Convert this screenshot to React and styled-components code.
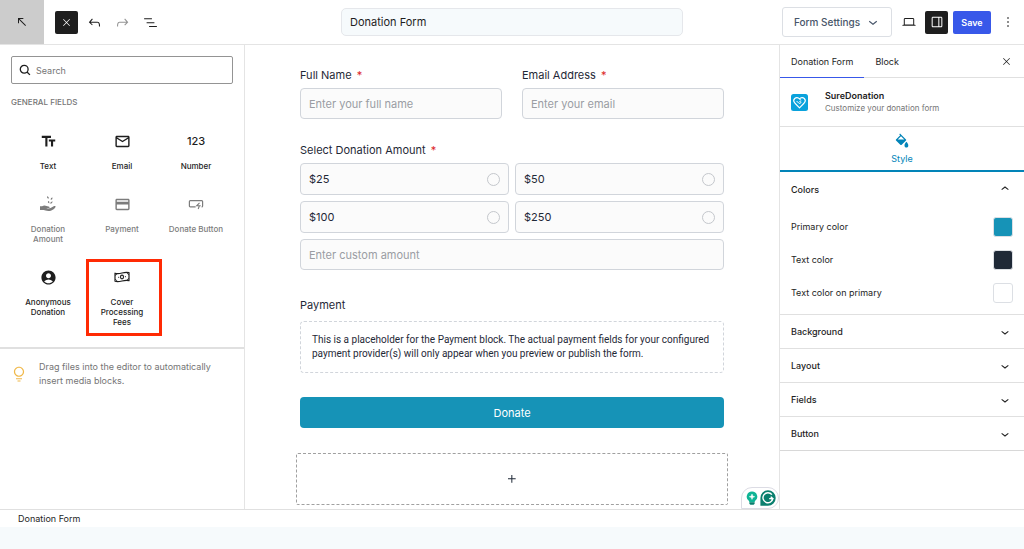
import React, { useState } from "react"
import styled, { createGlobalStyle } from "styled-components"
import { MdAccountCircle, MdCreditCard, MdMailOutline, MdTextFields } from "react-icons/md"

const icons = {
    arrow: "M14 6H6v8h1.5V8.5L17 18l1-1-9.5-9.5H14V6Z",
    close: "m13.06 12 6.47-6.47-1.06-1.06L12 10.94 5.53 4.47 4.47 5.53 10.94 12l-6.47 6.47 1.06 1.06L12 13.06l6.47 6.47 1.06-1.06L13.06 12Z",
    undo: "M18.3 11.7c-.6-.6-1.4-.9-2.3-.9H6.7l2.9-3.3-1.1-1-4.5 5L8.5 16l1-1-2.7-2.7H16c.5 0 .9.2 1.3.5 1 1 1 3.4 1 4.5v.3h1.5v-.2c0-1.5 0-4.3-1.5-5.7z",
    redo: "M15.6 6.5l-1.1 1 2.9 3.3H8c-.9 0-1.7.3-2.3.9-1.4 1.5-1.4 4.2-1.4 5.6v.2h1.5v-.3c0-1.1 0-3.5 1-4.5.3-.3.7-.5 1.3-.5h9.2L14.5 15l1.1 1.1 4.6-4.6-4.6-5z",
    list: "M3 6h11v1.5H3V6Zm3.5 5.5h11V13h-11v-1.5ZM21 17H10v1.5h11V17Z",
    desktop: "M20.5 16h-.7V8c0-1.1-.9-2-2-2H6.2c-1.1 0-2 .9-2 2v8h-.7c-.8 0-1.5.7-1.5 1.5h20c0-.8-.7-1.5-1.5-1.5zM5.7 8c0-.3.2-.5.5-.5h11.6c.3 0 .5.2.5.5v7.6H5.7V8z",
    drawer: "M18 4H6c-1.1 0-2 .9-2 2v12c0 1.1.9 2 2 2h12c1.1 0 2-.9 2-2V6c0-1.1-.9-2-2-2zm-4 14.5H6c-.3 0-.5-.2-.5-.5V6c0-.3.2-.5.5-.5h8v13zm4.5-.5c0 .3-.2.5-.5.5h-2.5v-13H18c.3 0 .5.2.5.5v12z",
    more: "M13 19h-2v-2h2v2zm0-6h-2v-2h2v2zm0-6h-2V5h2v2z",
    plus: "M11 12.5V17.5H12.5V12.5H17.5V11H12.5V6H11V11H6V12.5H11Z",
    down: "M17.5 11.6L12 16l-5.5-4.4.9-1.2L12 14l4.5-3.6 1 1.2z",
    up: "M6.5 12.4L12 8l5.5 4.4-.9 1.2L12 10l-4.5 3.6-1-1.2z",
    tip: "M12 15.8c-3.7 0-6.8-3-6.8-6.8s3-6.8 6.8-6.8c3.7 0 6.8 3 6.8 6.8s-3.1 6.8-6.8 6.8zm0-12C9.1 3.8 6.8 6.1 6.8 9s2.4 5.2 5.2 5.2c2.9 0 5.2-2.4 5.2-5.2S14.9 3.8 12 3.8zM8 17.5h8V19H8zM10 20.5h4V22h-4v-1.5z",
}

function Icon({ name, size = 16 }) {
    return (
        <svg width={size} height={size} viewBox="0 0 24 24" fill="currentColor" aria-hidden="true">
            <path d={icons[name]} />
        </svg>
    )
}

const SearchIcon = () => (
    <svg width="12" height="12" viewBox="0 0 12 12" fill="none" stroke="#1e1e1e" strokeWidth="1.3" aria-hidden="true">
        <circle cx="5.2" cy="5.2" r="3.9" />
        <path d="M8 8l2.900 2.900" />
    </svg>
)

const HandIcon = () => (
    <svg width="18" height="18" viewBox="0 0 18 18" fill="currentColor" aria-hidden="true">
        <path d="M1 11.300h2.200c1.300-.9 3-.9 4.300-.2.600.3 1.200.4 2 .4 1.300 0 1.600 1.300.4 1.500l-2.600.2c1.300.6 3.100.5 4.300-.1l3.100-1.900c1-.6 2.300-.1 1.800.8-.9 1.700-2.500 3-4.700 3.700-1.800.5-3.700.4-5.300-.1-1.200-.4-2.300-.5-3.600-.5H1z" />
        <path d="M8.400 1l1.400 1.400-.5 1.600-1.300-1.400zM12 3.100l1.600-.6-.4 1.800-1.500.7zM9 5.900l1.200.7.2 1.900-1.500-.9zM11.600 7.300l2-1-.5 1.800-1.700.9z" />
    </svg>
)

const ButtonIcon = () => (
    <svg width="16" height="16" viewBox="0 0 16 16" fill="none" stroke="currentColor" aria-hidden="true">
        <path d="M7.600 10.900H2.300c-.6 0-.9-.4-.9-.9V5.500c0-.6.400-.9.900-.9h11.400c.5 0 .9.400.9.900V10c0 .6-.4.9-1 .9" strokeWidth="1.200" />
        <path d="M11.500 6.900L8.700 9.800h2.700L10.200 13M11.300 9.800h1.400" strokeWidth="1.100" />
    </svg>
)

const CashIcon = () => (
    <svg width="18" height="16" viewBox="0 0 18 16" fill="none" stroke="currentColor" aria-hidden="true">
        <path d="M2 4.200c2.400.9 4.600.5 7-.2s4.600-1 7-.4v8.100c-2.400-.7-4.600-.3-7 .3s-4.600 1.100-7 .3z" strokeWidth="1.200" strokeLinejoin="round" />
        <ellipse cx="9" cy="8" rx="1.500" ry="1.900" strokeWidth="1.100" />
        <path d="M2 6.200c1.100 0 1.700-.6 1.700-1.600M16 5.400c-1.100 0-1.700-.5-1.700-1.600M2 10.500c1.100 0 1.700.6 1.700 1.700M16 9.700c-1.100 0-1.700.6-1.700 1.600M5.200 8.300h1M11.900 7.700h1" strokeWidth="1" />
    </svg>
)

const HeartLogo = () => (
    <svg width="17" height="17" viewBox="0 0 17 17" fill="none" aria-hidden="true">
        <rect width="17" height="17" rx="2.500" fill="#0aa2dc" />
        <path d="M8.500 13.800L3.800 9C2.500 7.600 2.600 5.600 3.700 4.500 5 3.200 7.100 3.300 8.500 4.900 9.900 3.300 12 3.200 13.300 4.500c1.100 1.100 1.200 3.100-.1 4.500z" stroke="#fff" strokeWidth="1.100" strokeLinejoin="round" />
        <path d="M5.900 7.300l1.800 1.800c.9.900 2.300.2 2.200-.9-.1-.9-1.200-1-1.600-.4M8.500 5l1.500 1.300" stroke="#fff" strokeLinecap="round" />
    </svg>
)

const PaintIcon = () => (
    <svg width="14" height="16" viewBox="0 0 14 16" fill="#0284b8" aria-hidden="true">
        <path d="M5 .6L11 6.400c.3.3.3.800 0 1.100L6.700 11.700c-.4.400-1 .4-1.400 0L1 7.500c-.3-.3-.3-.8 0-1.100L5.200 2.300 4.300 1.400zM6 3.200L2.700 6.500h6.600z" fillRule="evenodd" />
        <path d="M11.400 8.800c1.300 1.600 1.900 2.600 1.900 3.600 0 1.300-.8 2.200-1.900 2.200s-1.900-.9-1.900-2.200c0-1 .6-2 1.900-3.600z" />
    </svg>
)

const GrammarlyBulb = () => (
    <svg width="12" height="15" viewBox="0 0 12 15" aria-hidden="true">
        <path d="M6 .5a5.200 5.200 0 0 1 3 9.500l-.4 1.300H3.400L3 10A5.200 5.200 0 0 1 6 .5z" fill="#0fb495" />
        <path d="M3.400 11.300h5.200v1.500l-1 1H4.400l-1-1z" fill="#0a7f6e" />
        <path d="M6 3l.7 2 2 .7-2 .7L6 8.400l-.7-2-2-.7 2-.7z" fill="#fff" stroke="#fff" strokeWidth=".5" />
    </svg>
)

const GrammarlyMark = () => (
    <svg width="16" height="16" viewBox="0 0 16 16" aria-hidden="true">
        <path d="M8 .3A7.700 7.700 0 1 1 8 15.700H.4V8A7.700 7.700 0 0 1 8 .3z" fill="#0a7f6e" />
        <path d="M11.900 4.600A5 5 0 1 0 12.900 8.600H9.200M10.700 6.700l2.200 1.900-1.300 2" fill="none" stroke="#fff" strokeWidth="1.400" />
    </svg>
)

const blocks = [
    { label: "Text", icon: <MdTextFields size={17} /> },
    { label: "Email", icon: <MdMailOutline size={17} /> },
    { label: "Number", icon: <span>123</span> },
    { label: "Donation Amount", icon: <HandIcon />, disabled: true },
    { label: "Payment", icon: <MdCreditCard size={17} />, disabled: true },
    { label: "Donate Button", icon: <ButtonIcon />, disabled: true },
    { label: "Anonymous Donation", icon: <MdAccountCircle size={17} /> },
    { label: "Cover Processing Fees", icon: <CashIcon />, highlighted: true },
]

const colors = [
    { label: "Primary color", value: "#1693b7" },
    { label: "Text color", value: "#1f2937" },
    { label: "Text color on primary", value: "#ffffff" },
]

const amounts = ["$25", "$50", "$100", "$250"]

function App() {
    const [title, setTitle] = useState("Donation Form")
    const [amount, setAmount] = useState("")
    const [colorsOpen, setColorsOpen] = useState(true)

    return (
        <>
            <GlobalStyle />
            <Page>
                <Header>
                    <HeaderTools>
                        <BackLink href="#" aria-label="Back"><Icon name="arrow" /></BackLink>
                        <IconButton $dark aria-label="Close inserter"><Icon name="close" size={11} /></IconButton>
                        <IconButton aria-label="Undo"><Icon name="undo" size={17} /></IconButton>
                        <IconButton aria-label="Redo" disabled><Icon name="redo" size={17} /></IconButton>
                        <IconButton aria-label="List view"><Icon name="list" size={17} /></IconButton>
                    </HeaderTools>
                    <TitleInput aria-label="Form title" value={title} onChange={(e) => setTitle(e.target.value)} />
                    <HeaderActions>
                        <SettingsButton>Form Settings <Icon name="down" size={18} /></SettingsButton>
                        <IconButton aria-label="Preview"><Icon name="desktop" /></IconButton>
                        <IconButton $dark aria-label="Settings"><Icon name="drawer" /></IconButton>
                        <SaveButton>Save</SaveButton>
                        <IconButton aria-label="Options"><Icon name="more" /></IconButton>
                    </HeaderActions>
                </Header>

                <Body>
                    <Inserter>
                        <SearchBox>
                            <SearchIcon />
                            <input type="search" aria-label="Search" placeholder="Search" />
                        </SearchBox>
                        <GroupTitle>General Fields</GroupTitle>
                        <BlockGrid>
                            {blocks.map((block) => (
                                <BlockItem key={block.label} disabled={block.disabled} $highlighted={block.highlighted}>
                                    <BlockIcon>{block.icon}</BlockIcon>
                                    {block.label}
                                </BlockItem>
                            ))}
                        </BlockGrid>
                        <Tip>
                            <Icon name="tip" size={18} />
                            <p>Drag files into the editor to automatically insert media blocks.</p>
                        </Tip>
                    </Inserter>

                    <Canvas>
                        <Form onSubmit={(e) => e.preventDefault()}>
                            <FieldRow>
                                <Field>
                                    <FieldLabel htmlFor="name">Full Name <Required>*</Required></FieldLabel>
                                    <TextInput id="name" placeholder="Enter your full name" />
                                </Field>
                                <Field>
                                    <FieldLabel htmlFor="email">Email Address <Required>*</Required></FieldLabel>
                                    <TextInput id="email" type="email" placeholder="Enter your email" />
                                </Field>
                            </FieldRow>
                            <Field>
                                <FieldLabel as="span" id="amount">Select Donation Amount <Required>*</Required></FieldLabel>
                                <AmountGrid role="radiogroup" aria-labelledby="amount">
                                    {amounts.map((item) => (
                                        <AmountOption key={item}>
                                            {item}
                                            <input type="radio" name="amount" checked={amount === item} onChange={() => setAmount(item)} />
                                        </AmountOption>
                                    ))}
                                    <CustomAmount aria-label="Custom amount" placeholder="Enter custom amount" />
                                </AmountGrid>
                            </Field>
                            <PaymentField>
                                <FieldLabel as="span">Payment</FieldLabel>
                                <Placeholder>
                                    This is a placeholder for the Payment block. The actual payment fields for your configured payment provider(s) will only appear when you preview or publish the form.
                                </Placeholder>
                            </PaymentField>
                            <DonateButton>Donate</DonateButton>
                        </Form>
                        <Appender aria-label="Add block"><Icon name="plus" /></Appender>
                        <Grammarly>
                            <GrammarlyBulb />
                            <GrammarlyMark />
                        </Grammarly>
                    </Canvas>

                    <Settings>
                        <Tabs>
                            <Tab $active>Donation Form</Tab>
                            <Tab>Block</Tab>
                            <CloseButton aria-label="Close settings"><Icon name="close" size={11} /></CloseButton>
                        </Tabs>
                        <BlockCard>
                            <HeartLogo />
                            <div>
                                <h2>SureDonation</h2>
                                <p>Customize your donation form</p>
                            </div>
                        </BlockCard>
                        <StyleTab>
                            <PaintIcon />
                            Style
                        </StyleTab>
                        <PanelToggle aria-expanded={colorsOpen} onClick={() => setColorsOpen(!colorsOpen)}>
                            Colors <Icon name={colorsOpen ? "up" : "down"} />
                        </PanelToggle>
                        {colorsOpen && (
                            <ColorList>
                                {colors.map((color) => (
                                    <ColorRow key={color.label}>
                                        {color.label}
                                        <Swatch $color={color.value} aria-label={color.label} />
                                    </ColorRow>
                                ))}
                            </ColorList>
                        )}
                        {["Background", "Layout", "Fields", "Button"].map((name) => (
                            <PanelToggle key={name} $bordered aria-expanded={false}>
                                {name} <Icon name="down" />
                            </PanelToggle>
                        ))}
                        <PanelEnd />
                    </Settings>
                </Body>

                <Footer>Donation Form</Footer>
            </Page>
        </>
    )
}

export default App;

const GlobalStyle = createGlobalStyle`
    * {
        box-sizing: border-box;
    }
    body {
        margin: 0;
        background-color: #f6fafc;
        color: #1e1e1e;
        font-family: Inter, sans-serif;
        font-size: 9px;
    }
    button, input {
        font: inherit;
        color: inherit;
        margin: 0;
    }
    button {
        padding: 0;
        border: 0;
        background: none;
        cursor: pointer;
    }
    h2, p {
        margin: 0;
    }
    svg {
        display: block;
        flex-shrink: 0;
    }
`

const Page = styled.div`
    display: flex;
    flex-direction: column;
    min-height: calc(100vh - 22px);
    background-color: #fff;
`

const Header = styled.header`
    display: grid;
    grid-template-columns: 1fr minmax(200px, 342px) 1fr;
    align-items: center;
    height: 45px;
    border-bottom: 1px solid #e4e4e4;
`

const HeaderTools = styled.div`
    display: flex;
    align-items: center;
    align-self: stretch;
    gap: 5px;
`

const BackLink = styled.a`
    display: flex;
    align-items: center;
    justify-content: center;
    align-self: stretch;
    width: 44px;
    margin-right: 6px;
    background-color: #ccc;
    color: #1e1e1e;
`

const IconButton = styled.button`
    display: flex;
    align-items: center;
    justify-content: center;
    width: 23px;
    height: 23px;
    border-radius: 2px;
    background-color: ${({ $dark }) => ($dark ? "#1e1e1e" : "transparent")};
    color: ${({ $dark }) => ($dark ? "#fff" : "#1e1e1e")};
    &:disabled {
        color: #949494;
    }
`

const TitleInput = styled.input`
    width: 100%;
    height: 28px;
    padding: 0 8px;
    border: 1px solid #e5e7eb;
    border-radius: 5px;
    background-color: #f6fafc;
    font-size: 11px;
`

const HeaderActions = styled.div`
    display: flex;
    align-items: center;
    justify-content: flex-end;
    gap: 5px;
    padding-right: 5px;
`

const SettingsButton = styled.button`
    display: flex;
    align-items: center;
    justify-content: space-between;
    width: 110px;
    height: 30px;
    padding: 0 9px 0 11px;
    border: 1px solid #dcdfe4;
    border-radius: 3px;
    color: #475569;
    font-size: 10px;
    font-weight: 500;
    white-space: nowrap;
`

const SaveButton = styled.button`
    width: 38px;
    height: 23px;
    border-radius: 2px;
    background-color: #3858e9;
    color: #fff;
    font-weight: 600;
`

const Body = styled.div`
    flex: 1;
    display: grid;
    grid-template-columns: 245px 1fr 245px;
`

const Inserter = styled.aside`
    padding-top: 11px;
    border-right: 1px solid #e4e4e4;
`

const SearchBox = styled.label`
    display: flex;
    align-items: center;
    gap: 5px;
    height: 28px;
    margin: 0 11px;
    padding: 0 7px;
    border: 1px solid #949494;
    border-radius: 2px;
    input {
        flex: 1;
        min-width: 0;
        padding: 0;
        border: 0;
        outline: 0;
        background: none;
    }
    input::placeholder {
        color: #757575;
    }
`

const GroupTitle = styled.h2`
    margin: 12px 11px 0;
    color: #757575;
    font-size: 8px;
    font-weight: 500;
    line-height: 12px;
    text-transform: uppercase;
`

const BlockGrid = styled.div`
    display: grid;
    grid-template-columns: repeat(3, 1fr);
    padding: 16px 11px 4px;
`

const BlockItem = styled.button`
    position: relative;
    display: flex;
    flex-direction: column;
    align-items: center;
    gap: 12px;
    padding: 9px 7px 16px;
    font-size: 8px;
    font-weight: 500;
    line-height: 10px;
    &:disabled {
        color: #7c7c7c;
    }
    &::after {
        content: "";
        display: ${({ $highlighted }) => ($highlighted ? "block" : "none")};
        position: absolute;
        inset: -1px -3px 7px 1px;
        border: 3px solid #ff2a04;
    }
`

const BlockIcon = styled.span`
    display: flex;
    align-items: center;
    justify-content: center;
    height: 16px;
    font-size: 11px;
`

const Tip = styled.div`
    display: flex;
    align-items: center;
    gap: 11px;
    padding: 11px 10px;
    border-top: 2px solid #e0e0e0;
    color: #757575;
    line-height: 14px;
    svg {
        color: #f0b849;
    }
`

const Canvas = styled.main`
    position: relative;
    padding: 23px 20px 4px;
    font-size: 11px;
    color: #1f2937;
`

const Form = styled.form`
    display: flex;
    flex-direction: column;
    gap: 24px;
    max-width: 424px;
    margin: 0 auto;
`

const FieldRow = styled.div`
    display: grid;
    grid-template-columns: 1fr 1fr;
    gap: 20px;
`

const Field = styled.div`
    display: flex;
    flex-direction: column;
    gap: 5px;
`

const PaymentField = styled(Field)`
    gap: 8px;
    margin-top: 4px;
`

const FieldLabel = styled.label`
    line-height: 15px;
`

const Required = styled.span`
    margin-left: 2px;
    color: #dc2626;
`

const TextInput = styled.input`
    width: 100%;
    height: 31px;
    padding: 0 8px;
    border: 1px solid #d1d5db;
    border-radius: 4px;
    background-color: #fbfbfb;
    &::placeholder {
        color: #9a9da3;
    }
`

const AmountGrid = styled.div`
    display: grid;
    grid-template-columns: 1fr 1fr;
    gap: 6px;
`

const AmountOption = styled.label`
    display: flex;
    align-items: center;
    justify-content: space-between;
    height: 32px;
    padding: 0 8px;
    border: 1px solid #d1d5db;
    border-radius: 4px;
    background-color: #fbfbfb;
    input {
        appearance: none;
        width: 13px;
        height: 13px;
        border: 1px solid #c4c7cc;
        border-radius: 50%;
    }
    input:checked {
        border: 4px solid #1693b7;
    }
`

const CustomAmount = styled(TextInput)`
    grid-column: 1 / -1;
`

const Placeholder = styled.p`
    padding: 11px;
    border: 1px dashed #d1d5db;
    border-radius: 4px;
    font-family: Roboto, Inter, sans-serif;
    font-size: 10px;
    line-height: 14px;
`

const DonateButton = styled.button`
    height: 31px;
    border-radius: 4px;
    background-color: #1693b7;
    color: #fff;
    font-size: 11px;
`

const Appender = styled.button`
    display: flex;
    align-items: center;
    justify-content: center;
    width: 100%;
    max-width: 432px;
    height: 52px;
    margin: 25px auto 0;
    border: 1px dashed #a0a0a0;
    border-radius: 2px;
`

const Grammarly = styled.div`
    position: absolute;
    right: 0;
    bottom: 0;
    display: flex;
    align-items: center;
    justify-content: space-between;
    width: 38px;
    height: 22px;
    padding: 0 2px 0 4px;
    border: 1px solid #dcdce4;
    border-radius: 11px 11px 11px 0;
    background-color: #fff;
`

const Settings = styled.aside`
    border-left: 1px solid #e4e4e4;
`

const Tabs = styled.div`
    display: flex;
    height: 33px;
    border-bottom: 1px solid #e0e0e0;
`

const Tab = styled.button`
    height: 33px;
    padding: 0 11px;
    border-bottom: 1px solid ${({ $active }) => ($active ? "#3858e9" : "transparent")};
`

const CloseButton = styled.button`
    margin-left: auto;
    padding: 0 12px;
`

const BlockCard = styled.div`
    display: flex;
    align-items: center;
    gap: 17px;
    height: 49px;
    padding: 0 11px;
    border-bottom: 1px solid #e0e0e0;
    line-height: 13px;
    h2 {
        font-size: 9px;
        font-weight: 600;
    }
    p {
        color: #757575;
        font-size: 8px;
    }
`

const StyleTab = styled.button`
    display: flex;
    flex-direction: column;
    align-items: center;
    justify-content: center;
    gap: 4px;
    width: 100%;
    height: 45px;
    border-bottom: 2px solid #0284b8;
    color: #0284b8;
`

const PanelToggle = styled.button`
    display: flex;
    align-items: center;
    justify-content: space-between;
    width: 100%;
    height: 34px;
    padding: 0 11px;
    border-top: ${({ $bordered }) => ($bordered ? "1px solid #e0e0e0" : "0")};
    font-weight: 500;
`

const ColorList = styled.div`
    padding: 4px 11px 5px;
`

const ColorRow = styled.div`
    display: flex;
    align-items: center;
    justify-content: space-between;
    height: 33px;
`

const Swatch = styled.button`
    width: 20px;
    height: 20px;
    border: 1px solid #dcdfe4;
    border-radius: 3px;
    background-color: ${({ $color }) => $color};
`

const PanelEnd = styled.div`
    border-top: 1px solid #d8d8d8;
`

const Footer = styled.footer`
    height: 18px;
    padding: 0 18px;
    border-top: 1px solid #e0e0e0;
    line-height: 17px;
`
